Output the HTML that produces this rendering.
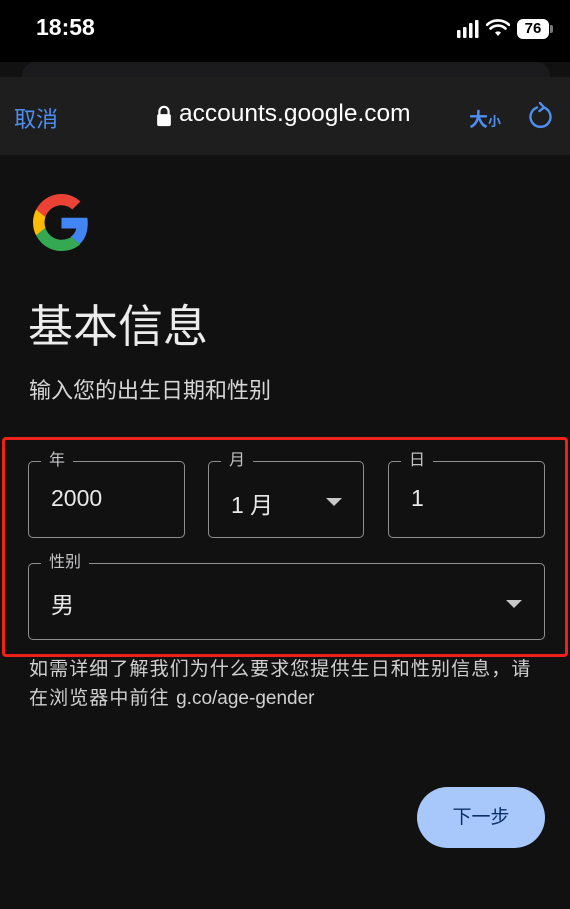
<!DOCTYPE html>
<html><head><meta charset="utf-8"><style>
*{margin:0;padding:0;box-sizing:border-box}
body{width:570px;height:909px;background:#111112;position:relative;overflow:hidden;font-family:"Liberation Sans","Noto Sans CJK SC",sans-serif;color:#e3e3e3}
.abs{position:absolute}
.status{left:0;top:0;width:570px;height:62px;background:#000}
.card{left:22px;top:62px;width:528px;height:30px;background:#1b1b1d;border-radius:14px}
.bar{left:0;top:77px;width:570px;height:78px;background:#1e1e1f}
.field{position:absolute;border:1.3px solid #8e8e90;border-radius:5px}
.lab{position:absolute;top:-12px;left:12px;background:#111112;padding:0 8px;font-size:16px;color:#c4c4c6;line-height:22px}
.val{position:absolute;left:22px;font-size:23px;color:#e8e8e8}
.tri{position:absolute;width:0;height:0;border-left:8px solid transparent;border-right:8px solid transparent;border-top:8px solid #c8c8c8}
</style></head><body>
<div class="abs status"></div>
<div class="abs" style="left:36px;top:14px;font-size:23px;color:#fff;font-weight:bold">18:58</div>
<svg class="abs" style="left:456px;top:19px" width="26" height="20"><g fill="#fff"><rect x="1" y="11" width="3.5" height="8" rx="1"/><rect x="7" y="8" width="3.5" height="11" rx="1"/><rect x="13" y="4" width="3.5" height="15" rx="1"/><rect x="19" y="1" width="3.5" height="18" rx="1"/></g></svg>
<svg class="abs" style="left:486px;top:19px" width="24" height="18" viewBox="0 0 24 18"><path d="M12 17l3-3.5a4.5 4.5 0 0 0-6 0z" fill="#fff"/><path d="M4.5 9.5a11 11 0 0 1 15 0M1 5.8a16 16 0 0 1 22 0" stroke="#fff" stroke-width="2.6" fill="none" stroke-linecap="round"/></svg>
<div class="abs" style="left:517px;top:19px;width:32px;height:20px;background:#fff;border-radius:6px;color:#000;font-size:15px;font-weight:bold;text-align:center;line-height:20px">76</div>
<div class="abs" style="left:550px;top:25px;width:3px;height:8px;background:#777;border-radius:0 2px 2px 0"></div>
<div class="abs card"></div>
<div class="abs bar"></div>
<div class="abs" style="left:14px;top:102px;font-size:22px;color:#4f8ff0">取消</div>
<svg class="abs" style="left:155px;top:105px" width="18" height="22" viewBox="0 0 18 24"><path d="M4 11V7a5 5 0 0 1 10 0v4" stroke="#fff" stroke-width="2.4" fill="none"/><rect x="1.5" y="10" width="15" height="13" rx="2" fill="#fff"/></svg>
<div class="abs" style="left:179px;top:100px;font-size:24.5px;color:#fff">accounts.google.com</div>
<div class="abs" style="left:469px;top:105px;font-size:19px;color:#4f8ff0;font-weight:bold">大<span style="font-size:13px">小</span></div>
<svg class="abs" style="left:527px;top:102px" width="28" height="28" viewBox="0 0 28 28"><path d="M17 5.5a10 10 0 1 1-7 0" stroke="#4f8ff0" stroke-width="2.4" fill="none" stroke-linecap="round"/><path d="M13 1l4 4.5-4.5 3.5" stroke="#4f8ff0" stroke-width="2.4" fill="none" stroke-linecap="round"/></svg>
<svg class="abs" style="left:33px;top:194px" width="57" height="57" viewBox="0 0 48 48"><path fill="#EA4335" d="M24 9.5c3.5 0 6.6 1.2 9.1 3.6l6.8-6.8C35.8 2.4 30.2 0 24 0 14.6 0 6.6 5.4 2.6 13.3l7.9 6.2C12.4 13.7 17.7 9.5 24 9.5z"/><path fill="#4285F4" d="M46.1 24.5c0-1.6-.1-3.1-.4-4.5H24v9h12.4c-.5 2.9-2.2 5.3-4.6 7l7.7 6c4.4-4.1 6.6-10.2 6.6-17.5z"/><path fill="#FBBC05" d="M10.5 28.6c-.5-1.4-.8-3-.8-4.6s.3-3.2.8-4.6l-7.9-6.2C.9 16.5 0 20.1 0 24s.9 7.5 2.6 10.8l7.9-6.2z"/><path fill="#34A853" d="M24 48c6.5 0 11.9-2.1 15.9-5.8l-7.7-6c-2.2 1.5-5 2.3-8.2 2.3-6.3 0-11.6-4.2-13.5-10l-7.9 6.2C6.6 42.6 14.6 48 24 48z"/></svg>
<div class="abs" style="left:28px;top:290px;font-size:45px;color:#ececec">基本信息</div>
<div class="abs" style="left:29px;top:373px;font-size:22px;color:#d6d6d6">输入您的出生日期和性别</div>
<div class="abs" style="left:2px;top:437px;width:566px;height:220px;border:3px solid #f0201a;border-radius:4px"></div>
<div class="field" style="left:28px;top:461px;width:157px;height:77px"><div class="lab">年</div><div class="val" style="top:23px">2000</div></div>
<div class="field" style="left:208px;top:461px;width:156px;height:77px"><div class="lab">月</div><div class="val" style="top:24px">1 月</div><div class="tri" style="left:117px;top:36px"></div></div>
<div class="field" style="left:388px;top:461px;width:157px;height:77px"><div class="lab">日</div><div class="val" style="top:23px">1</div></div>
<div class="field" style="left:28px;top:563px;width:517px;height:77px"><div class="lab">性别</div><div class="val" style="top:22px">男</div><div class="tri" style="left:477px;top:36px"></div></div>
<div class="abs" style="left:29px;top:655px;width:545px;font-size:19px;letter-spacing:1.1px;line-height:29px;color:#d0d0d0;white-space:nowrap">如需详细了解我们为什么要求您提供生日和性别信息，请<br>在浏览器中前往 <span style="letter-spacing:0">g.co/age-gender</span></div>
<div class="abs" style="left:417px;top:787px;width:128px;height:61px;background:#a8c7fa;border-radius:31px;color:#0b3168;font-size:19px;text-align:center;line-height:61px">下一步</div>
</body></html>
